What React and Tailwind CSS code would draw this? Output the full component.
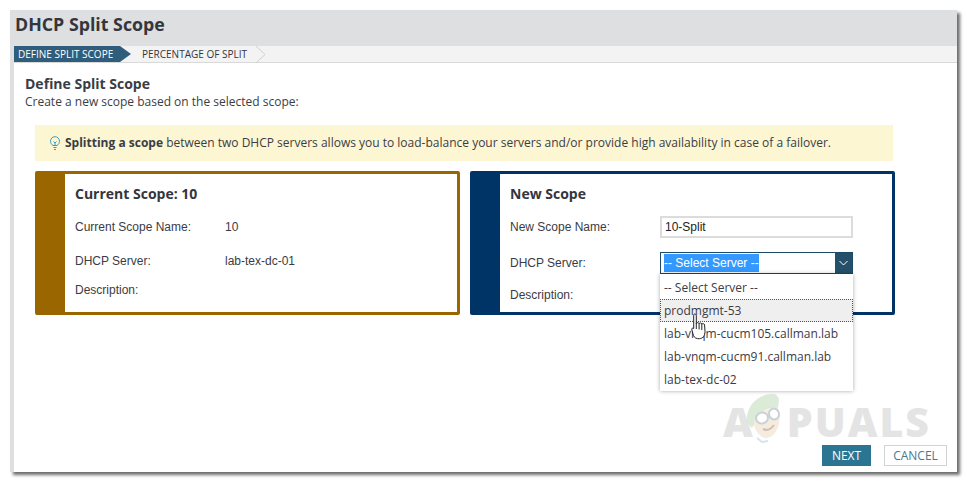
const sans = { fontFamily: '"Open Sans", sans-serif' };

function Field({ label, value, className }) {
  return (
    <div className={`flex text-[12px] text-[#3b3b45] ${className}`}>
      <span className="w-[150px]">{label}</span>
      {value && <span>{value}</span>}
    </div>
  );
}

function Card({ color, children, className }) {
  return (
    <div className={`h-[144px] w-[425px] rounded-[2px] border-[3px] pl-[27px] ${className}`} style={{ borderColor: color, background: color }}>
      <div className="h-full bg-white pl-[10px]">{children}</div>
    </div>
  );
}

function Mascot() {
  return (
    <svg width="38" height="50" viewBox="0 0 38 50" className="relative ml-[-8px] mr-[4px] mb-[1px]">
      <path d="M2 30C0 14 12 1 28 1c3 0 5 2 6 5l-1 9C24 14 14 18 10 30l-3 5z" fill="#dcebd8" />
      <path d="M9 30c1-8 12-15 24-15 3 8 2 18-3 25-4 5-10 7-14 3-4-3-7-8-7-13z" fill="#f6ebdf" />
      <ellipse cx="17" cy="25" rx="6" ry="5.500" transform="rotate(-15 17 25)" fill="#fff" stroke="#c9d2d6" strokeWidth="2" />
      <ellipse cx="29" cy="21" rx="5" ry="5.500" transform="rotate(-15 29 21)" fill="#fff" stroke="#c9d2d6" strokeWidth="2" />
      <path d="M18 36c4 2 8 0 11-4" fill="none" stroke="#cdbfb2" strokeWidth="2" />
      <path d="M12 45l5 4 6-1" fill="none" stroke="#d6e4ec" strokeWidth="2" />
    </svg>
  );
}

function HandCursor() {
  return (
    <svg width="16" height="27" viewBox="0 0 16 27">
      <path
        d="M3.500 1c1.100 0 1.800.8 1.800 2v7.500c.4-1.200 2.500-1.200 2.800.2.500-1.100 2.500-1 2.700.4.600-.9 2.600-.7 2.800.9l.4 6.500c0 4-2 7-5.500 7.200-3 .2-4.800-.8-6-3L.9 17c-.6-1.500.8-2.600 1.800-1.500V3c0-1.200.1-2 .8-2z"
        fill="#fff"
        stroke="#222"
        strokeWidth="1"
      />
      <path d="M5.300 10v6M8.100 10.500v6M10.800 11v6" stroke="#222" strokeWidth="1" />
    </svg>
  );
}

export default function App() {
  const servers = ['prodmgmt-53', 'lab-vnqm-cucm105.callman.lab', 'lab-vnqm-cucm91.callman.lab', 'lab-tex-dc-02'];

  return (
    <div className="h-[482px] w-[967px] overflow-hidden bg-white pl-[10px] pt-[10px]" style={{ fontFamily: '"Liberation Sans", sans-serif' }}>
      <div className="flex h-[462px] w-[947px] flex-col bg-white shadow-[3px_3px_3px_rgba(60,60,60,0.75)]">
        <div className="flex h-[36px] items-center bg-[#dedfe1] pb-[8px] pl-[5px] text-[17.800px] font-bold text-[#33363d]" style={sans}>
          DHCP Split Scope
        </div>

        <div className="relative flex min-h-0 flex-1 flex-col border-l-[4px] border-[#dedfe1]">
          <div className="flex h-[17px] items-center border-b border-[#d9d9d9] bg-[#f3f3f3] text-[10px]" style={sans}>
            <div className="flex h-full w-[117px] items-center bg-[#2f5d7c] pl-[4px] text-white [clip-path:polygon(0_0,106px_0,100%_50%,106px_100%,0_100%)]">
              DEFINE SPLIT SCOPE
            </div>
            <div className="ml-[11px] text-[#33363d]">PERCENTAGE OF SPLIT</div>
            <svg className="ml-[9px]" width="10" height="17" viewBox="0 0 10 17">
              <path d="M0 0l9 8.500L0 17" fill="none" stroke="#cfcfcf" />
            </svg>
          </div>

          <div className="pl-[11px] pt-[12px]" style={sans}>
            <h1 className="text-[14px] font-bold leading-[17px] text-[#3a3d44]">Define Split Scope</h1>
            <p className="mt-[1px] text-[12px] leading-[17px] text-[#3a3d44]">Create a new scope based on the selected scope:</p>
          </div>

          <div className="ml-[21px] mt-[15px] flex h-[36px] w-[858px] items-center gap-[5px] bg-[#fdf6d3] pl-[15px] text-[12px] text-[#3a3d44]" style={sans}>
            <svg width="10" height="14" viewBox="0 0 10 14" fill="none" stroke="#3b9cc0" strokeWidth="1">
              <path d="M3 9.500C1.500 8.500.5 7 .5 5.200a4.500 4.500 0 0 1 9 0C9.500 7 8.500 8.500 7 9.500z" />
              <path d="M3.500 5.500L5 7l1.500-1.500M5 7v2.500M3.500 11.500h3M4 13.500h2" />
            </svg>
            <span>
              <b>Splitting a scope</b> between two DHCP servers allows you to load-balance your servers and/or provide high availability in case of a failover.
            </span>
          </div>

          <div className="ml-[21px] mt-[10px] flex gap-[10px]">
            <Card color="#996600">
              <h2 className="pt-[11px] text-[14px] font-bold leading-[18px] text-[#33363d]" style={sans}>Current Scope: 10</h2>
              <Field label="Current Scope Name:" value="10" className="mt-[15px]" />
              <Field label="DHCP Server:" value="lab-tex-dc-01" className="mt-[16px]" />
              <Field label="Description:" className="mt-[11px]" />
            </Card>
            <Card color="#003366">
              <h2 className="pt-[11px] text-[14px] font-bold leading-[18px] text-[#33363d]" style={sans}>New Scope</h2>
              <div className="mt-[13px] flex h-[22px] items-center text-[12px] text-[#3b3b45]">
                <span className="w-[150px]">New Scope Name:</span>
                <div className="flex h-[22px] w-[193px] items-center border-2 border-[#dcdcdc] pl-[3px] text-[#222]">10-Split</div>
              </div>
              <div className="mt-[14px] flex h-[22px] items-center text-[12px] text-[#3b3b45]">
                <span className="w-[150px]">DHCP Server:</span>
                <div className="flex h-[22px] w-[193px] items-center justify-between border border-[#1f4a66] pl-[3px]">
                  <span className="bg-[#3399ff] text-white">-- Select Server --</span>
                  <span className="flex h-full w-[17px] items-center justify-center bg-[#24506c]">
                    <svg width="9" height="6" viewBox="0 0 9 6" fill="none" stroke="#fff" strokeWidth="1">
                      <path d="M.5 1l4 4 4-4" />
                    </svg>
                  </span>
                </div>
              </div>
              <div className="mt-[12px] text-[12px] text-[#3b3b45]">Description:</div>
            </Card>
          </div>

          {/* watermark */}
          <div className="absolute left-[709px] top-[347px] flex items-end text-[41px] font-extrabold leading-[46px] text-[#e4e4e4]" style={sans}>
            <span>A</span>
            <Mascot />
            <span className="tracking-[2px]">PUALS</span>
          </div>

          {/* open dropdown lies over the card */}
          <div className="absolute left-[646px] top-[228px] z-10 w-[193px] bg-white pt-[2px] text-[12px] leading-[23px] text-[#3b3b45] shadow-[0_0_4px_rgba(0,0,0,0.35)]" style={sans}>
            <div className="pl-[4px]">-- Select Server --</div>
            {servers.map((s, i) => (
              <div key={s} className={i === 0 ? 'border border-dotted border-[#555] bg-[#efefef] pl-[3px] leading-[21px]' : 'pl-[4px]'}>
                {s}
              </div>
            ))}
          </div>
          <div className="absolute left-[677px] top-[267px] z-20">
            <HandCursor />
          </div>

          <div className="absolute bottom-[6px] right-[10px] flex gap-[13px] text-[12px]" style={sans}>
            <button className="h-[21px] w-[49px] bg-[#2b7592] text-white">NEXT</button>
            <button className="h-[21px] w-[63px] border border-[#d3d3d3] text-[#4a7890]">CANCEL</button>
          </div>
        </div>
      </div>
    </div>
  );
}
